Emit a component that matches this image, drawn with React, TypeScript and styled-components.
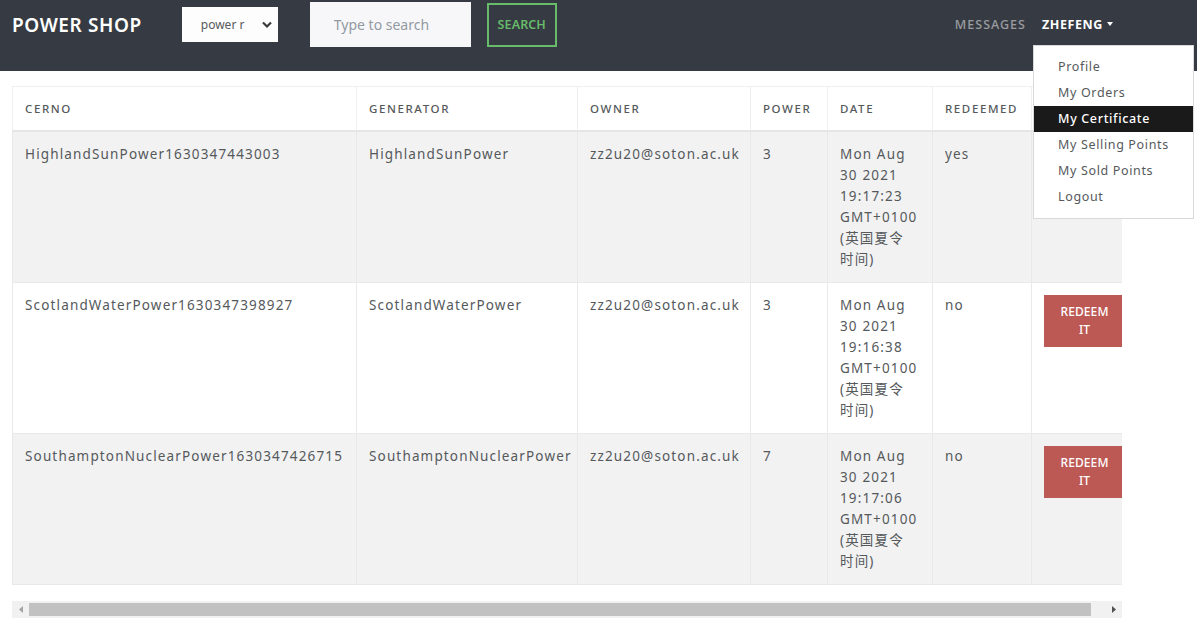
import React from "react";
import styled, { createGlobalStyle } from "styled-components";

const GlobalStyle = createGlobalStyle`
  * { box-sizing: border-box; }
  body {
    margin: 0;
    font-family: "Noto Sans", "Noto Sans CJK SC", sans-serif;
    color: #55595c;
    background: #ffffff;
  }
`;

const Page = styled.div`
  width: 1197px;
  min-height: 618px;
  position: relative;
`;

const Navbar = styled.header`
  position: relative;
  height: 71px;
  background: #363a42;
  padding: 0 84px 0 12px;
`;

const NavRow = styled.div`
  height: 49px;
  display: flex;
  align-items: center;
`;

const Brand = styled.div`
  font-size: 19px;
  font-weight: 600;
  color: #ffffff;
  letter-spacing: 0.6px;
  margin-right: 40px;
  white-space: nowrap;
`;

const SelectWrap = styled.div`
  position: relative;
  width: 96px;
  height: 35px;
`;

const Select = styled.select`
  appearance: none;
  width: 100%;
  height: 100%;
  border: none;
  outline: none;
  background: #fdfdfd;
  color: #55595c;
  font-family: inherit;
  font-size: 12px;
  padding: 0 0 0 19px;
`;

const Chevron = styled.svg`
  position: absolute;
  right: 5px;
  top: 14px;
  pointer-events: none;
`;

const SearchInput = styled.input`
  margin-left: 32px;
  width: 161px;
  height: 45px;
  border: none;
  outline: none;
  background: #f7f7f9;
  font-family: inherit;
  font-size: 14px;
  padding: 0 0 0 24px;
  color: #55595c;
  &::placeholder { color: #929aa2; }
`;

const SearchButton = styled.button`
  margin-left: 16px;
  width: 70px;
  height: 44px;
  background: transparent;
  border: 2px solid #67bb6a;
  color: #67bb6a;
  font-family: inherit;
  font-size: 12.5px;
  font-weight: 600;
  letter-spacing: 0.1px;
  padding: 0;
`;

const RightNav = styled.nav`
  margin-left: auto;
  display: flex;
  align-items: center;
  gap: 16px;
`;

const NavLink = styled.span<{ $active?: boolean }>`
  font-size: 12.5px;
  font-weight: ${(p) => (p.$active ? 700 : 500)};
  color: ${(p) => (p.$active ? "#ffffff" : "rgba(255,255,255,0.5)")};
  letter-spacing: ${(p) => (p.$active ? "0.6px" : "1px")};
  display: flex;
  align-items: center;
  gap: 4px;
`;

const Caret = styled.span`
  width: 0;
  height: 0;
  border-left: 3.5px solid transparent;
  border-right: 3.5px solid transparent;
  border-top: 4px solid #ffffff;
  margin-top: -2px;
`;

const Menu = styled.ul`
  position: absolute;
  top: 45px;
  right: 3px;
  width: 161px;
  margin: 0;
  padding: 8px 0;
  list-style: none;
  background: #ffffff;
  border: 1px solid rgba(0, 0, 0, 0.15);
  z-index: 10;
`;

const MenuItem = styled.li<{ $active?: boolean }>`
  height: 26px;
  line-height: 26px;
  padding: 0 0 0 24px;
  font-size: 12.5px;
  letter-spacing: 0.65px;
  color: ${(p) => (p.$active ? "#ffffff" : "#55595c")};
  background: ${(p) => (p.$active ? "#1a1a1a" : "transparent")};
  font-weight: ${(p) => (p.$active ? 500 : 400)};
  white-space: nowrap;
`;

const Main = styled.main`
  padding: 15px 0 0 12px;
`;

const TableScroll = styled.div`
  width: 1110px;
  overflow: hidden;
`;

const Table = styled.table`
  width: 1126px;
  table-layout: fixed;
  border-collapse: collapse;
  margin-bottom: 16px;
  font-size: 13.5px;
  letter-spacing: 1.15px;
`;

const Th = styled.th`
  text-align: left;
  font-size: 11.5px;
  font-weight: 500;
  text-transform: uppercase;
  letter-spacing: 1.6px;
  color: #55595c;
  height: 44px;
  padding: 0 12px;
  border: 1px solid #efefef;
  border-bottom: 2px solid #e6e6e6;
  white-space: nowrap;
  overflow: hidden;
`;

const Tr = styled.tr<{ $striped?: boolean }>`
  background: ${(p) => (p.$striped ? "#f2f2f2" : "#ffffff")};
`;

const Td = styled.td`
  vertical-align: top;
  height: 151px;
  padding: 12px 12px;
  line-height: 21px;
  border: 1px solid #e9e9e9;
  white-space: pre-line;
  overflow: hidden;
`;

const RedeemButton = styled.button`
  width: 81px;
  height: 52px;
  background: #bd5954;
  border: none;
  color: #ffffff;
  font-family: inherit;
  font-size: 12px;
  font-weight: 500;
  line-height: 18px;
  letter-spacing: 0.1px;
  padding: 0 10px;
`;

const Scrollbar = styled.div`
  width: 1110px;
  height: 17px;
  background: #f1f1f1;
  display: flex;
  align-items: center;
`;

const ScrollArrow = styled.div`
  width: 17px;
  height: 17px;
  display: flex;
  align-items: center;
  justify-content: center;
`;

const Thumb = styled.div`
  flex: 1;
  height: 13px;
  background: #c1c1c1;
  margin-right: 14px;
`;

type Row = {
  cerno: string;
  generator: string;
  owner: string;
  power: string;
  date: string;
  redeemed: string;
};

const rows: Row[] = [
  {
    cerno: "HighlandSunPower1630347443003",
    generator: "HighlandSunPower",
    owner: "zz2u20@soton.ac.uk",
    power: "3",
    date: "Mon Aug\n30 2021\n19:17:23\nGMT+0100\n(英国夏令\n时间)",
    redeemed: "yes",
  },
  {
    cerno: "ScotlandWaterPower1630347398927",
    generator: "ScotlandWaterPower",
    owner: "zz2u20@soton.ac.uk",
    power: "3",
    date: "Mon Aug\n30 2021\n19:16:38\nGMT+0100\n(英国夏令\n时间)",
    redeemed: "no",
  },
  {
    cerno: "SouthamptonNuclearPower1630347426715",
    generator: "SouthamptonNuclearPower",
    owner: "zz2u20@soton.ac.uk",
    power: "7",
    date: "Mon Aug\n30 2021\n19:17:06\nGMT+0100\n(英国夏令\n时间)",
    redeemed: "no",
  },
];

const menuItems = [
  "Profile",
  "My Orders",
  "My Certificate",
  "My Selling Points",
  "My Sold Points",
  "Logout",
];

const colWidths = [344, 221, 173, 77, 105, 99, 107];

export default function App() {
  return (
    <Page>
      <GlobalStyle />
      <Navbar>
        <NavRow>
          <Brand>POWER SHOP</Brand>
          <SelectWrap>
            <Select defaultValue="power">
              <option value="power">power r</option>
            </Select>
            <Chevron width="12" height="8" viewBox="0 0 12 8">
              <path d="M2 1.5 L6 5.5 L10 1.5" fill="none" stroke="#3a3a3a" strokeWidth="2.2" />
            </Chevron>
          </SelectWrap>
          <SearchInput placeholder="Type to search" />
          <SearchButton>SEARCH</SearchButton>
          <RightNav>
            <NavLink>MESSAGES</NavLink>
            <NavLink $active>
              ZHEFENG <Caret />
            </NavLink>
          </RightNav>
        </NavRow>
        <Menu>
          {menuItems.map((m) => (
            <MenuItem key={m} $active={m === "My Certificate"}>
              {m}
            </MenuItem>
          ))}
        </Menu>
      </Navbar>
      <Main>
        <TableScroll>
          <Table>
            <colgroup>
              {colWidths.map((w, i) => (
                <col key={i} style={{ width: w }} />
              ))}
            </colgroup>
            <thead>
              <tr>
                <Th>Cerno</Th>
                <Th>Generator</Th>
                <Th>Owner</Th>
                <Th>Power</Th>
                <Th>Date</Th>
                <Th>Redeemed</Th>
                <Th></Th>
              </tr>
            </thead>
            <tbody>
              {rows.map((r, i) => (
                <Tr key={r.cerno} $striped={i % 2 === 0}>
                  <Td>{r.cerno}</Td>
                  <Td>{r.generator}</Td>
                  <Td>{r.owner}</Td>
                  <Td>{r.power}</Td>
                  <Td>{r.date}</Td>
                  <Td>{r.redeemed}</Td>
                  <Td>{r.redeemed === "no" ? <RedeemButton>REDEEM IT</RedeemButton> : null}</Td>
                </Tr>
              ))}
            </tbody>
          </Table>
        </TableScroll>
        <Scrollbar>
          <ScrollArrow>
            <svg width="4" height="7" viewBox="0 0 4 7">
              <path d="M4 0 L0 3.5 L4 7 Z" fill="#a3a3a3" />
            </svg>
          </ScrollArrow>
          <Thumb />
          <ScrollArrow>
            <svg width="4" height="7" viewBox="0 0 4 7">
              <path d="M0 0 L4 3.5 L0 7 Z" fill="#505050" />
            </svg>
          </ScrollArrow>
        </Scrollbar>
      </Main>
    </Page>
  );
}
